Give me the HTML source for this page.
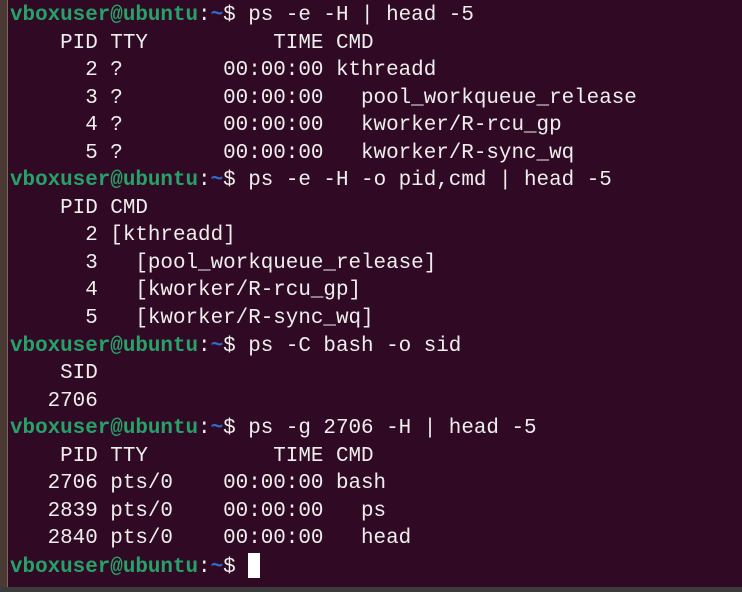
<!DOCTYPE html>
<html><head><meta charset="utf-8"><style>
html,body{margin:0;padding:0;width:742px;height:592px;overflow:hidden;background:#300a24;}
.l{position:absolute;left:0;top:0;width:7px;height:587px;background:#4a3a33;border-right:1px solid #7a6a60;}
.b{position:absolute;left:0;top:587px;width:742px;height:5px;background:#3b3b3b;}
pre{position:absolute;left:10px;top:2px;margin:0;font-family:"Liberation Mono",monospace;font-size:20.9px;line-height:27.55px;color:#eeeeec;}
.g{color:#26a269;font-weight:bold;}
.u{color:#2a6fc9;font-weight:bold;}
.c{display:inline-block;width:12px;height:25px;background:#fff;vertical-align:-6px;}
</style></head><body>
<div class="l"></div><div class="b"></div>
<pre><span class="g">vboxuser@ubuntu</span>:<span class="u">~</span>$ ps -e -H | head -5
    PID TTY          TIME CMD
      2 ?        00:00:00 kthreadd
      3 ?        00:00:00   pool_workqueue_release
      4 ?        00:00:00   kworker/R-rcu_gp
      5 ?        00:00:00   kworker/R-sync_wq
<span class="g">vboxuser@ubuntu</span>:<span class="u">~</span>$ ps -e -H -o pid,cmd | head -5
    PID CMD
      2 [kthreadd]
      3   [pool_workqueue_release]
      4   [kworker/R-rcu_gp]
      5   [kworker/R-sync_wq]
<span class="g">vboxuser@ubuntu</span>:<span class="u">~</span>$ ps -C bash -o sid
    SID
   2706
<span class="g">vboxuser@ubuntu</span>:<span class="u">~</span>$ ps -g 2706 -H | head -5
    PID TTY          TIME CMD
   2706 pts/0    00:00:00 bash
   2839 pts/0    00:00:00   ps
   2840 pts/0    00:00:00   head
<span class="g">vboxuser@ubuntu</span>:<span class="u">~</span>$ <span class="c"></span></pre>
</body></html>
